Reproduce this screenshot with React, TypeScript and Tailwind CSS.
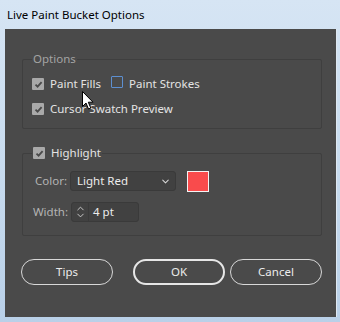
import { ChevronDown, ChevronUp } from "lucide-react";

const font = { fontFamily: '"Noto Sans", "Open Sans", sans-serif' };

function Check({ checked }: { checked: boolean }) {
  if (!checked) {
    return <span className="inline-block w-[12px] h-[12px] border border-[#5d8fd0] rounded-[1px] shrink-0" />;
  }
  return (
    <span className="inline-flex items-center justify-center w-[12px] h-[12px] bg-[#a9a9a9] rounded-[1px] shrink-0">
      <svg width="9" height="9" viewBox="0 0 9 9">
        <path d="M1.5 4.6 L3.6 6.7 L7.6 2.2" fill="none" stroke="#4a4a4a" strokeWidth="1.8" />
      </svg>
    </span>
  );
}

function PillButton({ label, primary }: { label: string; primary?: boolean }) {
  return (
    <button
      className={`h-[26px] w-[92px] rounded-full text-[11.5px] text-[#ececec] ${
        primary ? "border-2 border-[#e6e6e6]" : "border border-[#d8d8d8]"
      }`}
    >
      {label}
    </button>
  );
}

export default function App() {
  return (
    <div style={font} className="w-[340px] h-[322px] bg-gradient-to-b from-[#d6e5f4] via-[#c9dcef] to-[#b9d0e8] flex flex-col overflow-hidden relative">
      {/* title bar */}
      <div className="h-[29px] flex items-center pl-[7px] text-[11.5px] text-black">Live Paint Bucket Options</div>

      <div className="mx-[5px] mr-[3px] h-[288px] bg-[#4a4a4a] border-r border-[#dfe8f1] pt-[22px] pl-[17px]">
        {/* Options group */}
        <fieldset className="w-[300px] h-[78px] border border-[#3f3f3f] rounded-[2px] pl-[9px]">
          <legend className="px-[1px] text-[11.5px] leading-[16px] text-[#a4a4a4]">Options</legend>
          <div className="flex items-center gap-[6px] mt-[9px] h-[16px] text-[11.5px] text-[#e4e4e4]">
            <Check checked />
            <span>Paint Fills</span>
            <span className="ml-[4px]">
              <Check checked={false} />
            </span>
            <span>Paint Strokes</span>
          </div>
          <div className="flex items-center gap-[6px] mt-[9px] h-[16px] text-[11.5px] text-[#e4e4e4]">
            <Check checked />
            <span>Cursor Swatch Preview</span>
          </div>
        </fieldset>

        {/* Highlight group */}
        <fieldset className="mt-[16px] w-[300px] h-[91px] border border-[#3f3f3f] rounded-[2px] pl-[9px]">
          <legend className="flex items-center gap-[6px] px-[1px] text-[11.5px] leading-[16px] text-[#e4e4e4]">
            <Check checked />
            <span>Highlight</span>
          </legend>
          <div className="flex items-center mt-[10px] h-[20px]">
            <span className="w-[38px] text-right pr-[3px] text-[11.5px] text-[#b4b4b4]">Color:</span>
            <div className="w-[106px] h-[20px] bg-[#414141] border border-[#3a3a3a] rounded-[3px] flex items-center justify-between pl-[6px] pr-[4px] text-[11.5px] text-[#ececec]">
              <span>Light Red</span>
              <ChevronDown size={11} strokeWidth={2.2} color="#d8d8d8" />
            </div>
            <div className="ml-[11px] w-[22px] h-[21px] bg-[#f94b4c] border border-[#f4f4f4]" />
          </div>
          <div className="flex items-center mt-[11px] h-[20px]">
            <span className="w-[39px] text-right pr-[3px] text-[11.5px] text-[#b4b4b4]">Width:</span>
            <div className="w-[68px] h-[20px] bg-[#414141] border border-[#3a3a3a] rounded-[3px] flex items-center">
              <div className="w-[17px] h-full border-r border-[#3a3a3a] flex flex-col items-center justify-center">
                <ChevronUp size={11} strokeWidth={2} color="#d0d0d0" className="-mb-[2px]" />
                <ChevronDown size={11} strokeWidth={2} color="#d0d0d0" className="-mt-[2px]" />
              </div>
              <span className="pl-[4px] text-[11.5px] text-[#ececec]">4 pt</span>
            </div>
          </div>
        </fieldset>

        {/* buttons */}
        <div className="flex items-center mt-[23px] -ml-[1px]">
          <PillButton label="Tips" />
          <span className="w-[20px]" />
          <PillButton label="OK" primary />
          <span className="w-[5px]" />
          <PillButton label="Cancel" />
        </div>
      </div>

      {/* mouse pointer */}
      <svg className="absolute left-[82px] top-[91px]" width="12" height="19" viewBox="0 0 12 19">
        <path d="M0.5 0.5 L0.5 15.5 L4 12 L6.5 18 L8.8 17 L6.3 11.2 L11 11.2 Z" fill="#fff" stroke="#000" strokeWidth="1" />
      </svg>
    </div>
  );
}
